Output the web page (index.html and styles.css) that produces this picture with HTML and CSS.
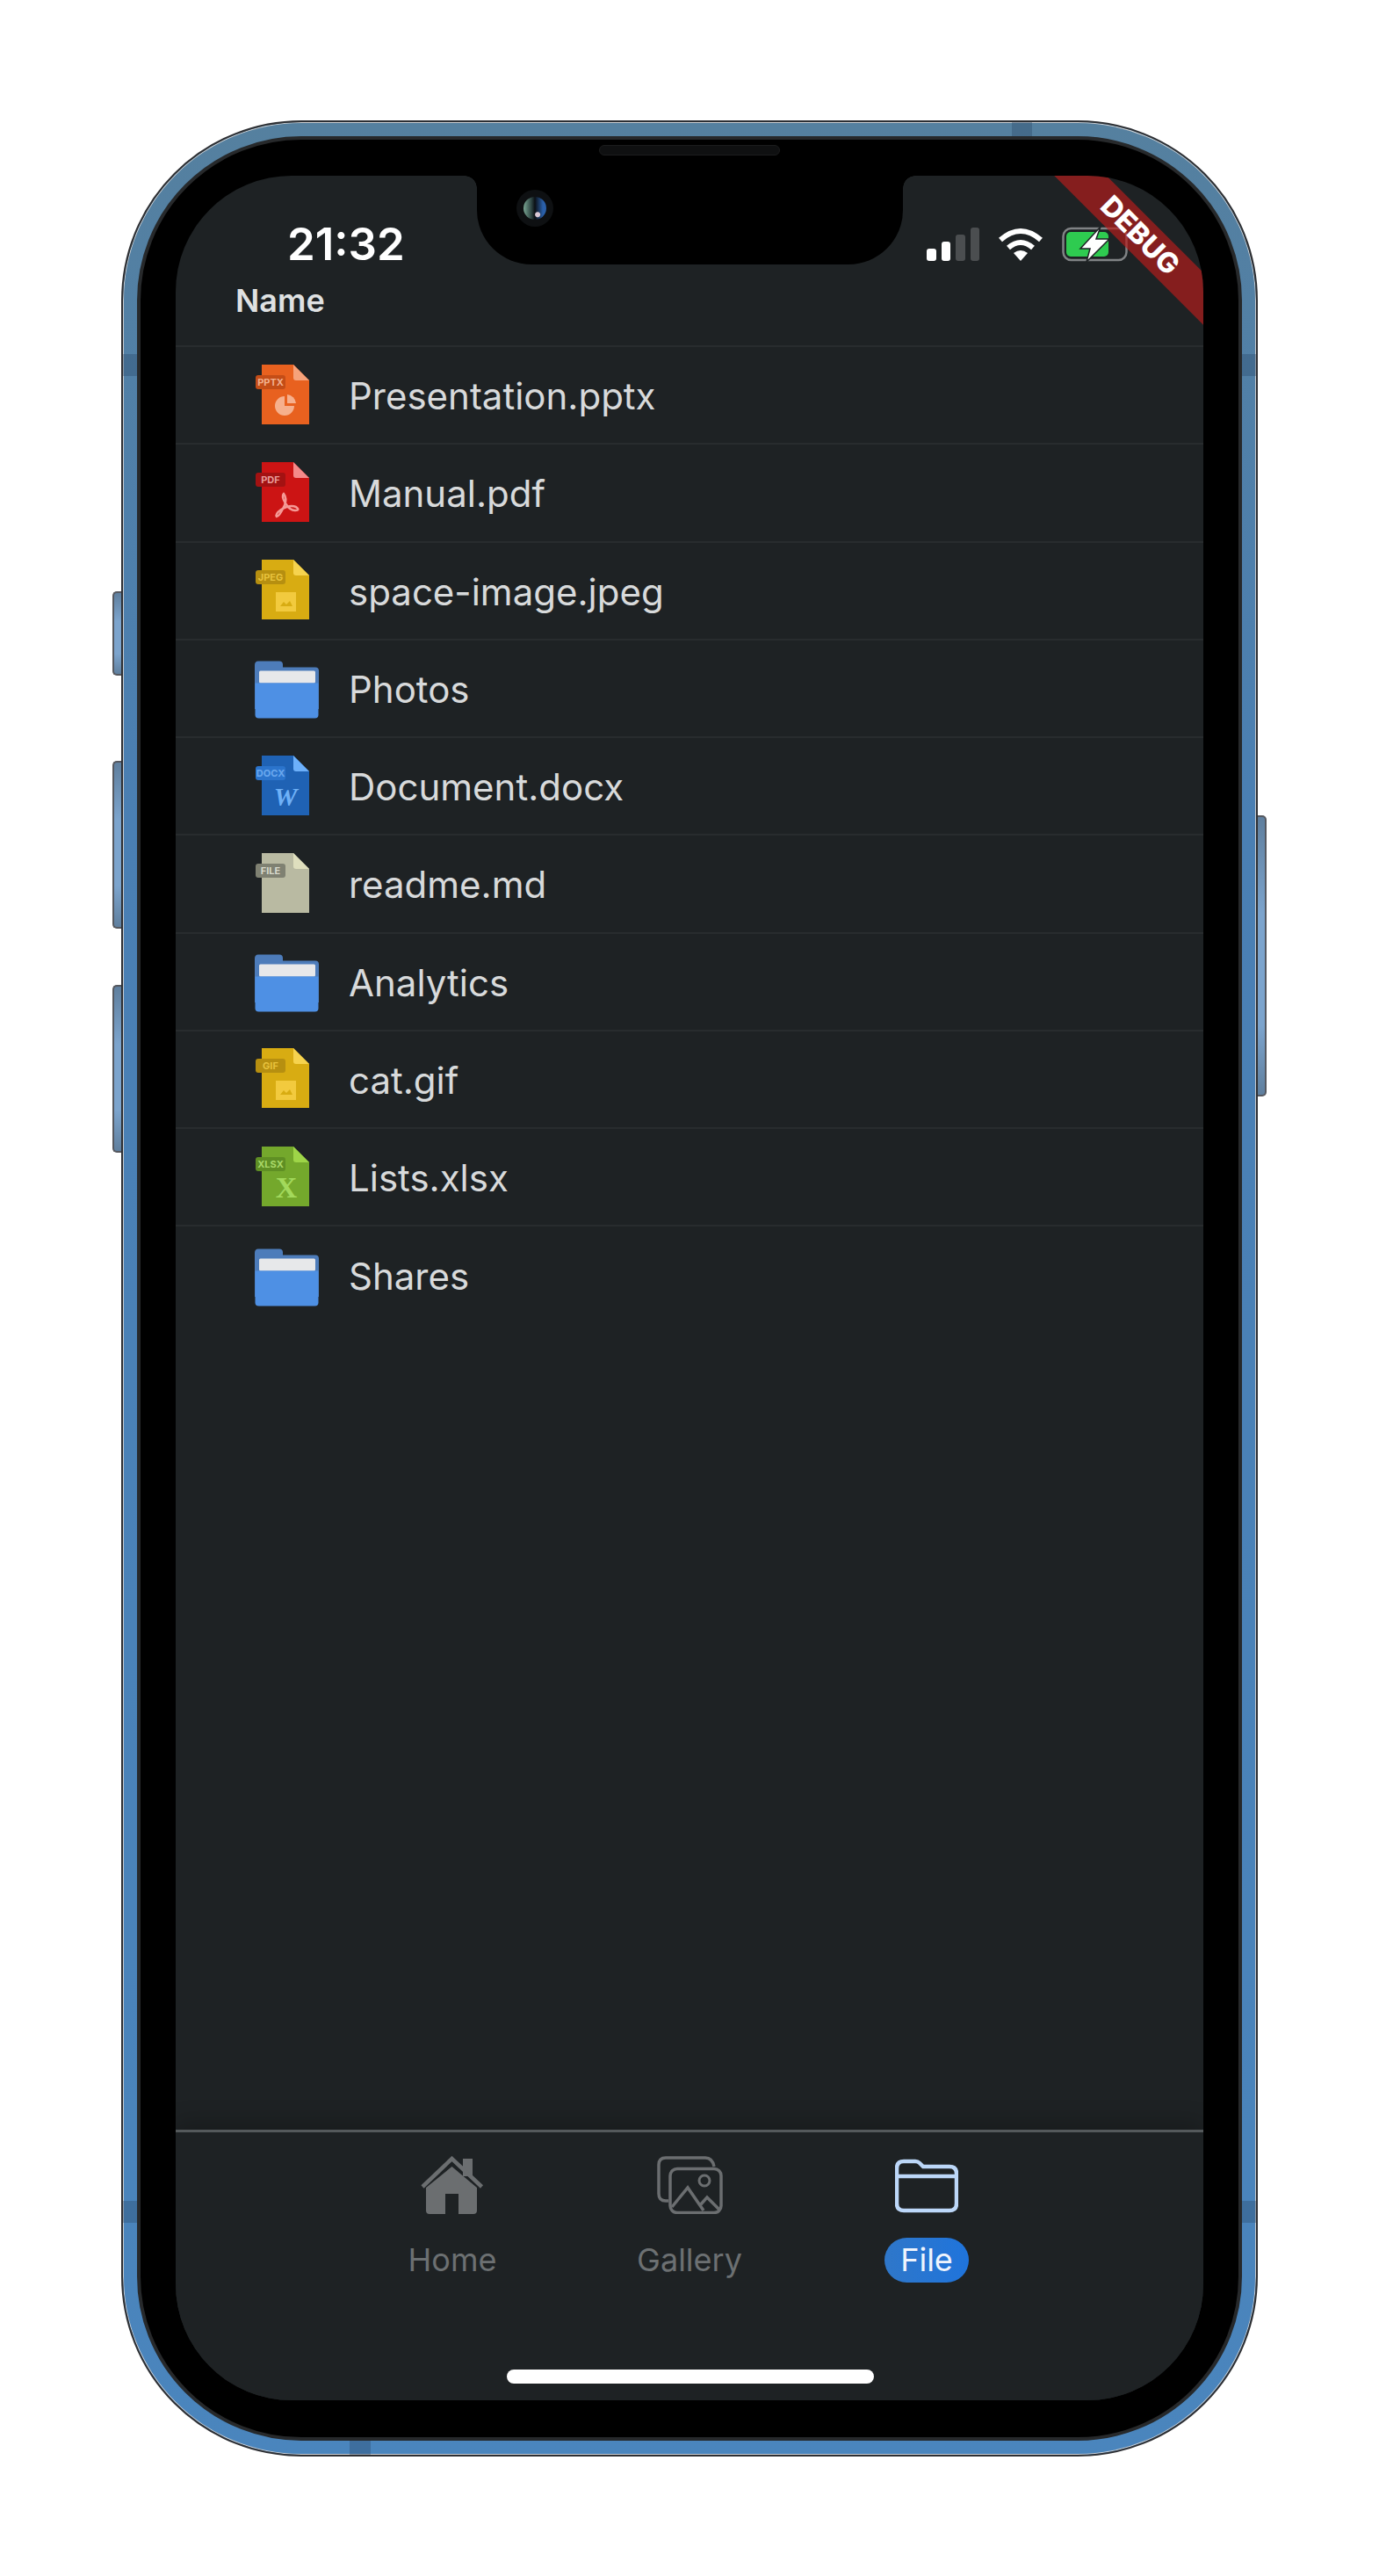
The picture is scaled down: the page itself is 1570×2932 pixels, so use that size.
FILE: index.html
```html
<!DOCTYPE html>
<html lang="en">
<head>
    <meta charset="UTF-8">
    <meta name="viewport" content="width=device-width, initial-scale=1.0">
    <title>File list</title>
    <link rel="stylesheet" href="styles.css">
</head>
<body>
    <svg class="defs" width="0" height="0">
        <symbol id="doc" viewBox="0 0 74 72">
            <path class="doc-body" d="M8 1H44L62 19V69H8Z"/>
            <path class="doc-fold" d="M44 1L62 19H47Q44 19 44 16Z"/>
            <rect class="doc-label" x="1" y="13" width="34" height="16" rx="3"/>
        </symbol>
        <symbol id="folder" viewBox="0 0 74 72">
            <path class="folder-back" d="M0 10Q0 5.500 4 5.500H28Q32 5.500 32 9.500V12.500H69Q73 12.500 73 16.500V60H0Z"/>
            <rect class="folder-paper" x="5" y="16.500" width="64" height="14" rx="1.500"/>
            <path class="folder-front" d="M0.500 30.500H72.500V66.500Q72.500 70.500 68.500 70.500H4.500Q0.500 70.500 0.500 66.500Z"/>
        </symbol>
        <symbol id="picture" viewBox="0 0 74 72">
            <rect class="doc-art" x="24" y="38" width="23" height="22"/>
            <path class="doc-art-dark" d="M29 54L33 49L36 52L40 48L43 54Z"/>
        </symbol>
    </svg>

    <div class="phone">
        <span class="side-btn btn-silent"></span>
        <span class="side-btn btn-up"></span>
        <span class="side-btn btn-down"></span>
        <span class="side-btn btn-power"></span>
        <span class="band band-tl"></span>
        <span class="band band-tr"></span>
        <span class="band band-top"></span>
        <span class="band band-bottom"></span>
        <span class="band band-bl"></span>
        <span class="band band-br"></span>

        <div class="bezel">
            <span class="speaker"></span>
            <div class="screen">
                <div class="notch">
                    <span class="camera"><span class="lens"></span></span>
                </div>
                <div class="ribbon">DEBUG</div>

                <div class="status">
                    <span class="time">21:32</span>
                    <div class="status-icons">
                        <div class="signal">
                            <span class="bar bar-1"></span>
                            <span class="bar bar-2"></span>
                            <span class="bar bar-3 off"></span>
                            <span class="bar bar-4 off"></span>
                        </div>
                        <svg class="wifi" width="50" height="38" viewBox="0 0 50 38">
                            <path d="M2 14Q25 -6 48 14" fill="none" stroke="#fff" stroke-width="6"/>
                            <path d="M11 23Q25 11 39 23" fill="none" stroke="#fff" stroke-width="6"/>
                            <path d="M25 38L17 29Q25 23 33 29Z" fill="#fff"/>
                        </svg>
                        <svg class="battery" width="76" height="40" viewBox="0 0 76 40">
                            <rect x="1.500" y="2" width="72" height="36" rx="9" fill="none" stroke="#808385" stroke-width="2.500"/>
                            <rect x="5" y="6" width="48" height="28" rx="5" fill="#2ecb50"/>
                            <path d="M44 0L21 25H32L28 40L54 14H39Z" fill="#fff" stroke="#1e2224" stroke-width="1.500"/>
                        </svg>
                    </div>
                </div>

                <div class="table-head">Name</div>

                <ul class="file-list">
                    <li class="file-row">
                        <svg class="file-icon pptx" viewBox="0 0 74 72">
                            <use href="#doc"/>
                            <text class="tag" x="18" y="25">PPTX</text>
                            <path class="doc-art" d="M34 37A11 11 0 1 0 45 48H34Z"/>
                            <path class="doc-art" d="M37 35A11 11 0 0 1 47 45H37Z"/>
                        </svg>
                        <span class="file-name">Presentation.pptx</span>
                    </li>
                    <li class="file-row">
                        <svg class="file-icon pdf" viewBox="0 0 74 72">
                            <use href="#doc"/>
                            <text class="tag" x="18" y="25">PDF</text>
                            <path class="pdf-mark" d="M33 37Q30 40 35 48Q40 56 46 56Q52 56 47 52Q40 49 30 55Q23 60 25 63Q28 63 34 50Q37 42 33 37Z"/>
                        </svg>
                        <span class="file-name">Manual.pdf</span>
                    </li>
                    <li class="file-row">
                        <svg class="file-icon img" viewBox="0 0 74 72">
                            <use href="#doc"/>
                            <text class="tag" x="18" y="25">JPEG</text>
                            <use href="#picture"/>
                        </svg>
                        <span class="file-name">space-image.jpeg</span>
                    </li>
                    <li class="file-row">
                        <svg class="file-icon" viewBox="0 0 74 72"><use href="#folder"/></svg>
                        <span class="file-name">Photos</span>
                    </li>
                    <li class="file-row">
                        <svg class="file-icon docx" viewBox="0 0 74 72">
                            <use href="#doc"/>
                            <text class="tag" x="18" y="25">DOCX</text>
                            <text class="big-letter word" x="35" y="58">W</text>
                        </svg>
                        <span class="file-name">Document.docx</span>
                    </li>
                    <li class="file-row">
                        <svg class="file-icon plain" viewBox="0 0 74 72">
                            <use href="#doc"/>
                            <text class="tag" x="18" y="25">FILE</text>
                        </svg>
                        <span class="file-name">readme.md</span>
                    </li>
                    <li class="file-row">
                        <svg class="file-icon" viewBox="0 0 74 72"><use href="#folder"/></svg>
                        <span class="file-name">Analytics</span>
                    </li>
                    <li class="file-row">
                        <svg class="file-icon img" viewBox="0 0 74 72">
                            <use href="#doc"/>
                            <text class="tag" x="18" y="25">GIF</text>
                            <use href="#picture"/>
                        </svg>
                        <span class="file-name">cat.gif</span>
                    </li>
                    <li class="file-row">
                        <svg class="file-icon xlsx" viewBox="0 0 74 72">
                            <use href="#doc"/>
                            <text class="tag" x="18" y="25">XLSX</text>
                            <text class="big-letter sheet" x="36" y="59">X</text>
                        </svg>
                        <span class="file-name">Lists.xlsx</span>
                    </li>
                    <li class="file-row last">
                        <svg class="file-icon" viewBox="0 0 74 72"><use href="#folder"/></svg>
                        <span class="file-name">Shares</span>
                    </li>
                </ul>

                <nav class="tabbar">
                    <div class="tabs">
                        <div class="tab">
                            <svg class="tab-icon" width="72" height="66" viewBox="0 0 72 66">
                                <rect x="48" y="3" width="11" height="20" fill="#6b6e70"/>
                                <path d="M2 35L35.500 3L69.500 35" fill="none" stroke="#6b6e70" stroke-width="4.500"/>
                                <path d="M6 36L35.500 12L64 36V62Q64 66 60 66H43V43H28V66H10Q6 66 6 62Z" fill="#6b6e70"/>
                            </svg>
                            <span class="tab-label">Home</span>
                        </div>
                        <div class="tab">
                            <svg class="tab-icon" width="75" height="66" viewBox="0 0 75 66">
                                <path d="M13 51H10Q2 51 2 43V10Q2 2 10 2H55Q63 2 65 12" fill="none" stroke="#6b6e70" stroke-width="3.500"/>
                                <rect x="15" y="14.500" width="58" height="50" rx="8" fill="none" stroke="#6b6e70" stroke-width="3.500"/>
                                <circle cx="54" cy="28" r="6" fill="none" stroke="#6b6e70" stroke-width="3"/>
                                <path d="M17 58L35 36L53 62M49 56L57 47L72 62" fill="none" stroke="#6b6e70" stroke-width="3.500"/>
                            </svg>
                            <span class="tab-label">Gallery</span>
                        </div>
                        <div class="tab active">
                            <svg class="tab-icon" width="72" height="66" viewBox="0 0 72 66">
                                <path d="M2 14Q2 6 10 6H23Q26 6 28 8L32 12H62Q70 12 70 20V54Q70 62 62 62H10Q2 62 2 54ZM2 23H70" fill="none" stroke="#bcd7f8" stroke-width="4.500"/>
                            </svg>
                            <span class="tab-label">File</span>
                        </div>
                    </div>
                    <div class="home-bar"></div>
                </nav>
            </div>
        </div>
    </div>
</body>
</html>
```

FILE: styles.css
```css
* {
    box-sizing: border-box;
}
body {
    margin: 0;
    min-height: 2932px;
    padding-top: 137px;
    display: flex;
    justify-content: center;
    align-items: flex-start;
    background: #fff;
    font-family: Inter, "Liberation Sans", sans-serif;
}
.defs {
    position: absolute;
}
.phone {
    position: relative;
    width: 1294px;
    height: 2659px;
    padding: 16px;
    border: 2px solid #2d2f33;
    border-radius: 205px;
    background: linear-gradient(180deg, #55809f 0%, #4a7fb3 30%, #4a85bd 100%);
    box-shadow: inset 0 0 0 1px #c9ccd0;
}
.side-btn {
    position: absolute;
    width: 10px;
    border: 2px solid #55585f;
    background: linear-gradient(180deg, #5f7f9e 0%, #7ca4cd 35%, #7ca4cd 75%, #5f7f9e 100%);
}
.btn-silent, .btn-up, .btn-down {
    left: -12px;
    border-right: 0;
    border-radius: 5px 0 0 5px;
}
.btn-silent {
    top: 534px;
    height: 96px;
}
.btn-up {
    top: 727px;
    height: 191px;
}
.btn-down {
    top: 982px;
    height: 191px;
}
.btn-power {
    right: -12px;
    top: 789px;
    height: 320px;
    border-left: 0;
    border-radius: 0 5px 5px 0;
}
.band {
    position: absolute;
    background: rgba(40, 70, 100, 0.35);
}
.band-top {
    top: 0;
    left: 1012px;
    width: 23px;
    height: 16px;
}
.band-bottom {
    bottom: 0;
    left: 258px;
    width: 24px;
    height: 16px;
}
.band-tl, .band-bl {
    left: 0;
    width: 16px;
    height: 25px;
}
.band-tr, .band-br {
    right: 0;
    width: 16px;
    height: 25px;
}
.band-tl, .band-tr {
    top: 264px;
}
.band-bl, .band-br {
    top: 2366px;
}
.bezel {
    position: relative;
    height: 100%;
    padding: 41px 40px 42px;
    border: 4px solid #27292b;
    border-radius: 187px;
    background: #000;
}
.speaker {
    position: absolute;
    left: 522px;
    top: 6px;
    width: 206px;
    height: 12px;
    border: 1px solid #1b1c1d;
    border-radius: 6px;
    background: #0f1011;
}
.screen {
    position: relative;
    display: flex;
    flex-direction: column;
    height: 100%;
    overflow: hidden;
    border-radius: 132px;
    background: #1e2224;
}
.notch {
    position: absolute;
    left: 343px;
    top: 0;
    width: 485px;
    height: 101px;
    border-radius: 0 0 62px 62px;
    background: #000;
    z-index: 2;
}
.notch::before, .notch::after {
    content: "";
    position: absolute;
    top: 0;
    width: 14px;
    height: 14px;
}
.notch::before {
    left: -14px;
    background: radial-gradient(circle at 0 100%, transparent 13.500px, #000 14px);
}
.notch::after {
    right: -14px;
    background: radial-gradient(circle at 100% 100%, transparent 13.500px, #000 14px);
}
.camera {
    position: absolute;
    left: 45px;
    top: 16px;
    width: 42px;
    height: 42px;
    display: flex;
    align-items: center;
    justify-content: center;
    border-radius: 50%;
    background: #0e1012;
}
.lens {
    width: 26px;
    height: 26px;
    border-radius: 50%;
    background:
        radial-gradient(circle at 62% 78%, #d9c8d6 0, #d9c8d6 2.500px, transparent 3.500px),
        linear-gradient(90deg, #7aa794 0%, #2c4240 35%, #0b0f14 50%, #2a5fa8 85%);
}
.ribbon {
    position: absolute;
    left: 948px;
    top: 47px;
    width: 300px;
    height: 42px;
    transform: rotate(45deg);
    background: rgba(183, 28, 28, 0.68);
    color: #fff;
    font-size: 32px;
    font-weight: 800;
    line-height: 42px;
    text-align: center;
    z-index: 3;
}
.status {
    display: flex;
    justify-content: space-between;
    align-items: center;
    padding: 58px 85px 0 127px;
}
.time {
    color: #fff;
    font-size: 51px;
    font-weight: 600;
    line-height: 38px;
}
.status-icons {
    display: flex;
    align-items: center;
}
.signal {
    display: flex;
    align-items: flex-end;
    gap: 6px;
    height: 38px;
    margin-right: 22px;
}
.bar {
    width: 10.500px;
    border-radius: 3px;
    background: #fff;
}
.bar.off {
    background: #4b4e50;
}
.bar-1 {
    height: 14px;
}
.bar-2 {
    height: 22px;
}
.bar-3 {
    height: 30px;
}
.bar-4 {
    height: 38px;
}
.wifi {
    margin-right: 22px;
}
.table-head {
    height: 97px;
    padding-left: 68px;
    border-bottom: 2px solid #282c2e;
    color: #dfe1e2;
    font-size: 36px;
    font-weight: 600;
    line-height: 88px;
}
.file-list {
    flex: 1;
    margin: 0;
    padding: 0;
    list-style: none;
}
.file-row {
    display: flex;
    align-items: center;
    gap: 33px;
    height: 111.250px;
    padding-left: 90px;
    border-bottom: 2px solid #282c2e;
}
.file-row.last {
    border-bottom: 0;
}
.file-icon {
    width: 74px;
    height: 72px;
    flex: none;
    --body: #e8611f;
    --fold: #f6a27a;
    --label: #c44d17;
    --tag: #f2b08f;
    --art: #f6b08d;
}
.file-name {
    padding-top: 3px;
    color: #d8dadb;
    font-size: 42px;
    line-height: 48px;
}
.doc-body {
    fill: var(--body);
}
.doc-fold {
    fill: var(--fold);
}
.doc-label {
    fill: var(--label);
}
.doc-art {
    fill: var(--art);
}
.doc-art-dark {
    fill: var(--body);
}
.tag {
    fill: var(--tag);
    font-size: 11px;
    font-weight: 700;
    text-anchor: middle;
}
.folder-back {
    fill: #4d7cba;
}
.folder-paper {
    fill: #e7e8ea;
}
.folder-front {
    fill: #4e90e4;
}
.pdf {
    --body: #cc1414;
    --fold: #f58a8a;
    --label: #a31212;
    --tag: #e89a9a;
}
.pdf-mark {
    fill: none;
    stroke: #f59a96;
    stroke-width: 2.500;
}
.img {
    --body: #d8ac12;
    --fold: #f6d34e;
    --label: #b68f10;
    --tag: #e7c23c;
    --art: #f2ca3e;
}
.docx {
    --body: #1f62b4;
    --fold: #6db0fa;
    --label: #2b74cc;
    --tag: #6aa8ee;
}
.plain {
    --body: #b9baa2;
    --fold: #dfdfbe;
    --label: #7f8172;
    --tag: #d8d9cc;
}
.xlsx {
    --body: #74a82c;
    --fold: #9ed548;
    --label: #5f8f24;
    --tag: #a9d868;
}
.big-letter {
    font-family: "Liberation Serif", serif;
    font-weight: 700;
    text-anchor: middle;
}
.word {
    fill: #6fb1f7;
    font-size: 30px;
    font-style: italic;
}
.sheet {
    fill: #a3d95c;
    font-size: 34px;
}
.tabbar {
    height: 308px;
    padding-top: 27px;
    border-top: 3px solid #54595b;
    box-shadow: 0 -8px 24px rgba(0, 0, 0, 0.22);
    background: #1e2224;
}
.tabs {
    display: flex;
    justify-content: center;
}
.tab {
    display: flex;
    flex-direction: column;
    align-items: center;
    width: 270px;
}
.tab-icon {
    display: block;
    height: 66px;
    margin-bottom: 27px;
}
.tab-label {
    height: 51px;
    padding: 0 18px;
    border-radius: 26px;
    color: #6c7072;
    font-size: 36px;
    line-height: 51px;
}
.tab.active .tab-label {
    background: linear-gradient(90deg, #2f77c9 0%, #1f74dc 100%);
    color: #eef4fd;
}
.home-bar {
    width: 418px;
    height: 16px;
    margin: 99px 0 0 377px;
    border-radius: 8px;
    background: #fff;
}
```
